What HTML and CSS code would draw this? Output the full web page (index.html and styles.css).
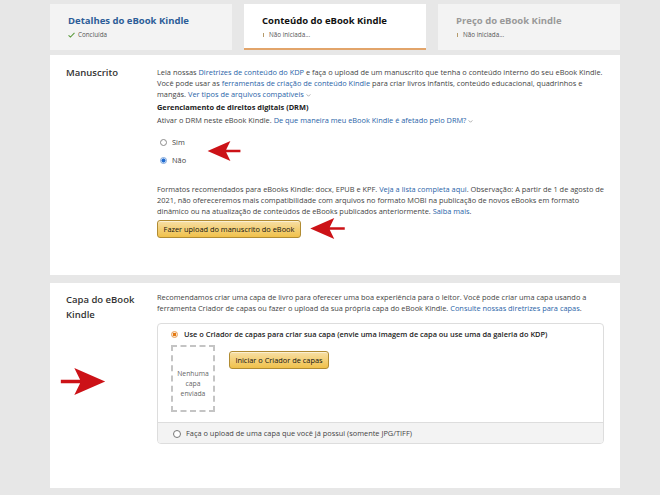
FILE: index.html
```html
<!DOCTYPE html>
<html lang="pt-BR">
<head>
    <meta charset="UTF-8">
    <meta name="viewport" content="width=device-width, initial-scale=1.0">
    <title>Conteúdo do eBook Kindle</title>
    <link rel="stylesheet" href="styles.css">
</head>
<body>
    <div class="page">
        <div class="tabs">
            <div class="tab done">
                <div class="tab-title">Detalhes do eBook Kindle</div>
                <div class="tab-status">
                    <svg class="check" viewBox="0 0 8 6" width="7" height="6"><path d="M0.6 3.4 L2.8 5.3 L7.4 0.6" fill="none" stroke="#5a9a3c" stroke-width="1.2"/></svg>
                    Concluída
                </div>
            </div>
            <div class="tab active">
                <div class="tab-title">Conteúdo do eBook Kindle</div>
                <div class="tab-status"><span class="bang"></span>Não iniciada...</div>
            </div>
            <div class="tab">
                <div class="tab-title">Preço do eBook Kindle</div>
                <div class="tab-status"><span class="bang"></span>Não iniciada...</div>
            </div>
        </div>

        <section class="panel manuscript">
            <h2 class="label">Manuscrito</h2>
            <div class="content">
                <p>Leia nossas <a href="#">Diretrizes de conteúdo do KDP</a> e faça o upload de um manuscrito que tenha o conteúdo interno do seu eBook Kindle. Você pode usar as <a href="#">ferramentas de criação de conteúdo Kindle</a> para criar livros infantis, conteúdo educacional, quadrinhos e mangás. <a href="#">Ver tipos de arquivos compatíveis</a> <svg class="caret" viewBox="0 0 6 4" width="5" height="3"><path d="M0.5 0.5 L3 3 L5.5 0.5" fill="none" stroke="#888" stroke-width="0.9"/></svg></p>
                <h4>Gerenciamento de direitos digitais (DRM)</h4>
                <p>Ativar o DRM neste eBook Kindle. <a href="#">De que maneira meu eBook Kindle é afetado pelo DRM?</a> <svg class="caret" viewBox="0 0 6 4" width="5" height="3"><path d="M0.5 0.5 L3 3 L5.5 0.5" fill="none" stroke="#888" stroke-width="0.9"/></svg></p>
                <div class="radios">
                    <label class="radio"><span class="dot"></span>Sim</label>
                    <label class="radio"><span class="dot checked"></span>Não</label>
                </div>
                <p class="formats">Formatos recomendados para eBooks Kindle: docx, EPUB e KPF. <a href="#">Veja a lista completa aqui</a>. Observação: A partir de 1 de agosto de 2021, não ofereceremos mais compatibilidade com arquivos no formato MOBI na publicação de novos eBooks em formato dinâmico ou na atualização de conteúdos de eBooks publicados anteriormente. <a href="#">Saiba mais</a>.</p>
                <button class="btn upload">Fazer upload do manuscrito do eBook</button>
            </div>

            <svg class="arrow arrow-drm" viewBox="0 0 46 28" width="38" height="20"><path d="M0 12.3 H20 L14 0 L46 14 L14 28 L20 15.7 H0 Z"/></svg>
            <svg class="arrow arrow-upload" viewBox="0 0 46 28" width="41" height="21"><path d="M0 12.3 H20 L14 0 L46 14 L14 28 L20 15.7 H0 Z"/></svg>
        </section>

        <section class="panel cover">
            <h2 class="label">Capa do eBook Kindle</h2>
            <div class="content">
                <p>Recomendamos criar uma capa de livro para oferecer uma boa experiência para o leitor. Você pode criar uma capa usando a ferramenta Criador de capas ou fazer o upload da sua própria capa do eBook Kindle. <a href="#">Consulte nossas diretrizes para capas</a>.</p>
                <div class="cover-box">
                    <div class="cover-option selected">
                        <label class="radio strong"><span class="dot orange"></span>Use o Criador de capas para criar sua capa (envie uma imagem de capa ou use uma da galeria do KDP)</label>
                        <div class="cover-media">
                            <div class="placeholder">Nenhuma capa enviada</div>
                            <button class="btn small">Iniciar o Criador de capas</button>
                        </div>
                    </div>
                    <div class="cover-option other">
                        <label class="radio"><span class="dot big"></span>Faça o upload de uma capa que você já possui (somente JPG/TIFF)</label>
                    </div>
                </div>
            </div>

            <svg class="arrow arrow-cover" viewBox="0 0 46 28" width="46" height="27"><path d="M0 12.3 H20 L14 0 L46 14 L14 28 L20 15.7 H0 Z"/></svg>
        </section>
    </div>
</body>
</html>
```

FILE: styles.css
```css
body {
    margin: 0;
    background: #e7e7e7;
    font-family: "Open Sans", "Liberation Sans", sans-serif;
    color: #333;
}

.page {
    width: 570px;
    margin-left: 50px;
    padding-top: 4px;
}

/* steps on top */
.tabs {
    display: flex;
    gap: 12px;
}

.tab {
    flex: 1;
    height: 46px;
    box-sizing: border-box;
    background: #f3f3f3;
    padding: 10px 0 0 18px;
}

.tab.active {
    background: #fff;
    border-bottom: 2px solid #e2a46a;
}

.tab-title {
    font-size: 9.5px;
    font-weight: 700;
    line-height: 13px;
    color: #999;
}

.tab.done .tab-title { color: #2d5d98; }
.tab.active .tab-title { color: #111; }

.tab-status {
    display: flex;
    align-items: center;
    gap: 3px;
    font-size: 6.3px;
    line-height: 9px;
    margin-top: 3px;
    color: #555;
}

.bang {
    width: 1px;
    height: 4px;
    background: #b59a6a;
    margin: 0 2px 0 1px;
}

/* panels */
.panel {
    position: relative;
    display: flex;
    background: #fff;
    margin-top: 5px;
    padding: 12px 16px 0 16px;
}

.panel.manuscript { height: 220px; box-sizing: border-box; }
.panel.cover {
    height: 205px;
    box-sizing: border-box;
    margin-top: 8px;
    padding-top: 9px;
}

.label {
    width: 91px;
    flex-shrink: 0;
    margin: 0;
    font-size: 9.5px;
    font-weight: 600;
    line-height: 12px;
    color: #333;
}

.cover .label {
    line-height: 15px;
    width: 80px;
    margin-right: 11px;
}

.content {
    width: 447px;
    font-size: 7.4px;
    line-height: 11px;
    color: #444;
}

.content p { margin: 0; }

.content a {
    color: #2a64a8;
    text-decoration: none;
}

.caret {
    vertical-align: middle;
}

h4 {
    margin: 2px 0 0;
    font-size: 7.4px;
    font-weight: 700;
    color: #222;
    line-height: 11px;
}

.content h4 + p { margin-top: 2px; }

.radios {
    display: flex;
    flex-direction: column;
    gap: 7px;
    margin-top: 11px;
}

.radio {
    display: flex;
    align-items: center;
    gap: 5px;
    padding-left: 3px;
    line-height: 11px;
}

.dot {
    width: 7px;
    height: 7px;
    border: 1px solid #8a8a8a;
    border-radius: 50%;
    box-sizing: border-box;
    background: #fff;
}

.dot.checked {
    border-color: #7ea6dc;
    background: radial-gradient(circle, #1f6bd0 0 1.8px, #cfe0f6 2.2px);
}

.dot.orange {
    border-color: #e5a05a;
    background: radial-gradient(circle, #e47911 0 1.6px, #fbe5cf 2px);
}

.dot.big {
    width: 8px;
    height: 8px;
    border-color: #777;
}

.content .formats { margin-top: 18px; }

.btn {
    display: block;
    font-family: inherit;
    font-size: 7.4px;
    color: #111;
    background: linear-gradient(#f7dfa5, #f0c14b);
    border: 1px solid #b18c33;
    border-radius: 3px;
    box-shadow: 0 1px 0 rgba(255, 255, 255, 0.5) inset;
    padding: 0;
    cursor: pointer;
}

.btn.upload {
    width: 144px;
    height: 18px;
    margin-top: 3px;
}

.btn.small {
    width: 100px;
    height: 18px;
    margin: 6px 0 0 14px;
}

/* cover choice */
.cover-box {
    margin-top: 9px;
    border: 1px solid #ddd;
    border-radius: 4px;
    overflow: hidden;
}

.cover-option.selected {
    padding: 5px 13px 10px 12px;
}

.radio.strong {
    font-weight: 600;
    color: #222;
    gap: 6px;
    padding-left: 1px;
}

.cover-media {
    display: flex;
    align-items: flex-start;
    margin-top: 5px;
}

.placeholder {
    width: 44px;
    height: 67px;
    box-sizing: border-box;
    border: 2px dashed #c4c4c4;
    display: flex;
    align-items: center;
    justify-content: center;
    text-align: center;
    padding: 10px 2px 0;
    font-size: 6.8px;
    line-height: 10px;
    color: #666;
    margin-left: 1px;
}

.cover-option.other {
    background: #f3f3f3;
    border-top: 1px solid #ddd;
    height: 21px;
    display: flex;
    align-items: center;
    padding: 1px 12px 0;
    box-sizing: border-box;
}

/* red hint arrows laid over the screenshot */
.arrow {
    position: absolute;
    fill: #cc1217;
}

.arrow-drm {
    left: 155px;
    top: 86px;
    transform: scaleX(-1);
}

.arrow-upload {
    left: 257px;
    top: 163px;
    transform: scaleX(-1);
}

.arrow-cover {
    left: 10px;
    top: 85px;
}
```
